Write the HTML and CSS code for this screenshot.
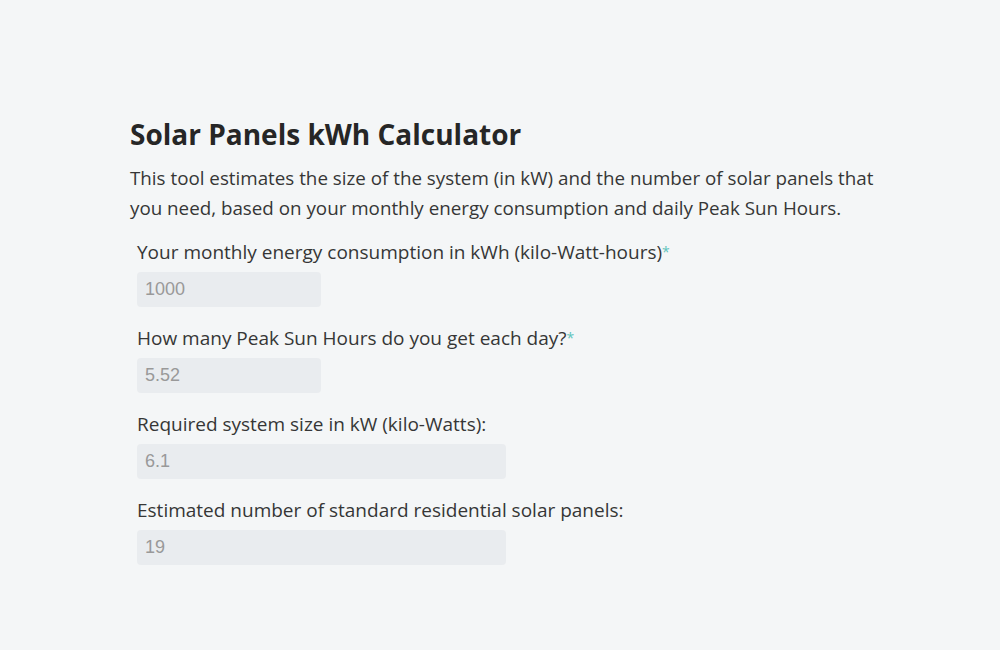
FILE: index.html
```html
<!DOCTYPE html>
<html lang="en">
<head>
  <meta charset="UTF-8" />
  <meta name="viewport" content="width=device-width, initial-scale=1.0" />
  <title>Solar Panels kWh Calculator</title>
  <link rel="stylesheet" href="styles.css">
</head>
<body>
  <div class="calc">
    <h2>Solar Panels kWh Calculator</h2>
    <p class="intro">This tool estimates the size of the system (in kW) and the number of solar panels that you need, based on your monthly energy consumption and daily Peak Sun Hours.</p>

    <form class="fields">
      <div class="field">
        <label for="usage">Your monthly energy consumption in kWh (kilo-Watt-hours)<span class="req">*</span></label>
        <input type="text" id="usage" class="short" placeholder="1000" />
      </div>
      <div class="field">
        <label for="sun">How many Peak Sun Hours do you get each day?<span class="req">*</span></label>
        <input type="text" id="sun" class="short" placeholder="5.52" />
      </div>
      <div class="field">
        <label for="size">Required system size in kW (kilo-Watts):</label>
        <input type="text" id="size" class="long" placeholder="6.1" readonly />
      </div>
      <div class="field">
        <label for="panels">Estimated number of standard residential solar panels:</label>
        <input type="text" id="panels" class="long" placeholder="19" readonly />
      </div>
    </form>
  </div>
</body>
</html>
```

FILE: styles.css
```css
body { margin: 0; background: #f4f6f7; font-family: "Open Sans", "Noto Sans", Arial, sans-serif; color: #333; }
.calc { width: 750px; padding: 112px 0 0 130px; }
.calc h2 { margin: 0; font-size: 28px; font-weight: 700; line-height: 44px; color: #262626; }
.intro { margin: 7px 0 16px; font-size: 18.8px; line-height: 30px; color: #363636; }
.fields { padding-left: 7px; }
.field { margin-bottom: 18px; }
.field label { display: block; font-size: 19px; line-height: 26px; margin-bottom: 7px; color: #363636; }
.req { color: #5fc4bc; font-size: 14px; vertical-align: top; }
.field input { display: block; box-sizing: border-box; height: 35px; padding: 0 8px; border: none; border-radius: 4px; background: #e9ecef; font-family: "Liberation Sans", Arial, sans-serif; font-size: 18px; color: #999; }
.field input::placeholder { color: #999; }
.short { width: 184px; }
.long { width: 369px; }
```
